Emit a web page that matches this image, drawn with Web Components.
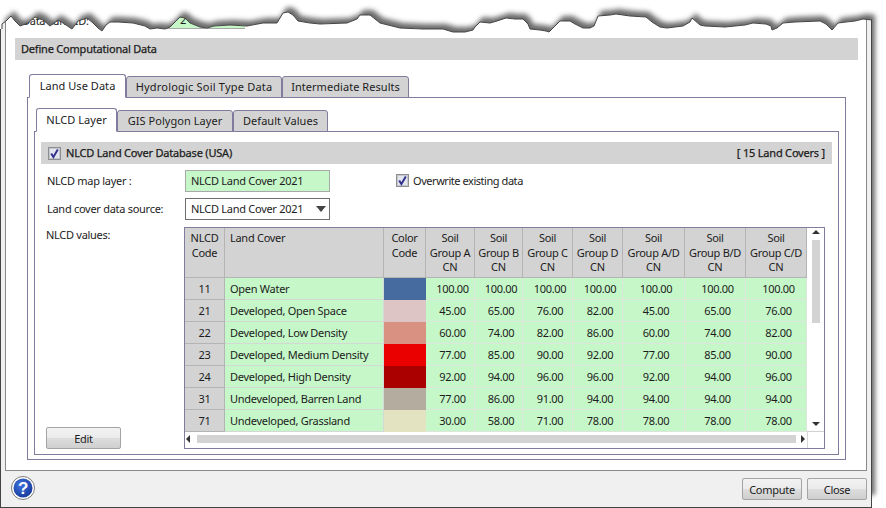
<!DOCTYPE html>
<html>
<head>
<meta charset="utf-8">
<title>Define Computational Data</title>
<style>
  html, body { margin: 0; padding: 0; background: #fff; }
  body { width: 886px; height: 508px; overflow: hidden; font: 11px "Noto Sans", "Open Sans", sans-serif; letter-spacing: -.28px; color: #1c1c1c; }
</style>
</head>
<body>

<torn-frame>
  <define-dialog>
    <section-band slot="band" plain>Define Computational Data</section-band>
    <tab-panel>
      <tab-item slot="tabs" selected style="width:97px">Land Use Data</tab-item>
      <tab-item slot="tabs" style="width:156px;letter-spacing:.2px">Hydrologic Soil Type Data</tab-item>
      <tab-item slot="tabs" style="width:127px">Intermediate Results</tab-item>
      <tab-panel nested>
        <tab-item slot="tabs" selected style="width:81px">NLCD Layer</tab-item>
        <tab-item slot="tabs" style="width:116px">GIS Polygon Layer</tab-item>
        <tab-item slot="tabs" style="width:95px">Default Values</tab-item>
        <nlcd-form></nlcd-form>
      </tab-panel>
    </tab-panel>
  </define-dialog>
</torn-frame>

<template id="form-tpl">
  <style>
    :host { display: flex; flex-direction: column; flex: 1; padding: 10px 6px 0; box-sizing: border-box; }
    .fields { display: grid; grid-template-columns: 138px 145px auto; row-gap: 6px; align-items: center; padding: 6px 0 0 6px; }
    .fields > span { position: relative; top: -1px; }
    .box { box-sizing: border-box; height: 22px; display: flex; align-items: center; padding: 0 0 2px 5px; }
    .green { background: #c6f7c8; border: 1px solid #a9a9a9; }
    .combo { background: #fff; border: 1px solid #6f6f6f; position: relative; }
    .combo i { position: absolute; right: 3px; top: 7px; border: 5px solid transparent; border-top: 6px solid #444; border-bottom: 0; }
    .over { display: flex; align-items: center; gap: 4px; margin: -2px 0 0 66px; letter-spacing: -.45px; }
    .values { display: grid; grid-template-columns: 138px auto; margin: 7px 0 0 5px; height: 222px; }
    .left { display: flex; flex-direction: column; justify-content: space-between; align-items: flex-start; }
    .left span { line-height: 16px; }
  </style>
  <section-band>
    <check-mark slot="icon"></check-mark>
    NLCD Land Cover Database (USA)
    <span slot="end">[ 15 Land Covers ]</span>
  </section-band>
  <div class="fields">
    <span>NLCD map layer :</span>
    <div class="box green">NLCD Land Cover 2021</div>
    <label class="over"><check-mark></check-mark>Overwrite existing data</label>
    <span>Land cover data source:</span>
    <div class="box combo">NLCD Land Cover 2021<i></i></div>
    <span></span>
  </div>
  <div class="values">
    <div class="left">
      <span>NLCD values:</span>
      <flat-button style="width:75px">Edit</flat-button>
    </div>
    <nlcd-grid>
      <nlcd-row code="11" cover="Open Water" color="#466b9f" values="100.00 100.00 100.00 100.00 100.00 100.00 100.00"></nlcd-row>
      <nlcd-row code="21" cover="Developed, Open Space" color="#dec5c5" values="45.00 65.00 76.00 82.00 45.00 65.00 76.00"></nlcd-row>
      <nlcd-row code="22" cover="Developed, Low Density" color="#d99282" values="60.00 74.00 82.00 86.00 60.00 74.00 82.00"></nlcd-row>
      <nlcd-row code="23" cover="Developed, Medium Density" color="#eb0000" values="77.00 85.00 90.00 92.00 77.00 85.00 90.00"></nlcd-row>
      <nlcd-row code="24" cover="Developed, High Density" color="#ab0000" values="92.00 94.00 96.00 96.00 92.00 94.00 96.00"></nlcd-row>
      <nlcd-row code="31" cover="Undeveloped, Barren Land" color="#b3ac9f" values="77.00 86.00 91.00 94.00 94.00 94.00 94.00"></nlcd-row>
      <nlcd-row code="71" cover="Undeveloped, Grassland" color="#e3e3c2" values="30.00 58.00 71.00 78.00 78.00 78.00 78.00"></nlcd-row>
    </nlcd-grid>
  </div>
</template>

<script>
// small helper, every element below is the same few lines otherwise
function shadow(el, html) {
  const root = el.attachShadow({ mode: 'open' });
  root.innerHTML = html;
  return root;
}

// torn paper edge of the screenshot, traced from the picture
const EDGE = [[2,29],[2,24],[6,21],[11,16],[15,21],[20,26],[28,23],[35,17],[43,20],[50,26],[54,23],[58,20],[63,23],[72,29],[78,21],[87,18],[93,23],[98,28],[102,31],[106,25],[110,22],[118,22],[133,23],[145,26],[150,29],[157,28],[165,29],[170,27],[175,22],[180,17],[185,18],[190,23],[200,27],[207,28],[214,26],[230,25],[247,26],[263,23],[277,23],[283,13],[288,12],[293,15],[298,21],[310,23],[320,24],[347,23],[357,19],[360,15],[370,15],[380,23],[400,28],[423,29],[443,29],[453,32],[465,32],[473,30],[475,27],[480,22],[490,23],[497,21],[506,18],[515,19],[523,19],[528,24],[530,29],[540,30],[546,31],[549,32],[553,28],[560,21],[570,21],[575,24],[583,28],[590,28],[594,26],[598,16],[610,15],[616,14],[630,16],[646,17],[652,22],[660,27],[667,28],[675,27],[683,26],[690,22],[692,18],[700,25],[705,26],[725,27],[745,25],[753,23],[766,24],[771,26],[772,30],[777,28],[783,23],[795,22],[820,21],[826,24],[832,30],[838,23],[846,22],[855,21],[863,19],[872,20]];

class TornFrame extends HTMLElement {
  constructor() {
    super();
    const line = EDGE.map(p => p.join(',')).join(' ');
    const clip = 'polygon(' + EDGE.map(p => p[0] + 'px ' + p[1] + 'px').join(',') + ',872px 508px,0 508px,0 29px)';
    shadow(this, `
      <style>
        :host { display: block; position: relative; width: 886px; height: 508px; overflow: hidden; }
        svg { position: absolute; left: 0; top: 0; }
        .paper { position: relative; width: 872px; height: 508px; display: flex; clip-path: ${clip}; }
      </style>
      <svg width="886" height="508">
        <defs><filter id="blur" x="-5%" y="-5%" width="110%" height="110%"><feGaussianBlur stdDeviation="2.6"/></filter></defs>
        <polygon points="${line} 872,500 2,500" transform="translate(3,-5)" fill="#444" opacity=".8" filter="url(#blur)"/>
      </svg>
      <div class="paper"><slot></slot></div>
      <svg width="886" height="508"><polyline points="${line}" fill="none" stroke="#444" stroke-width="1"/></svg>`);
  }
}
customElements.define('torn-frame', TornFrame);

class DefineDialog extends HTMLElement {
  constructor() {
    super();
    shadow(this, `
      <style>
        :host { display: flex; flex-direction: column; width: 872px; height: 508px; box-sizing: border-box; background: #f0f0f0; border: 1px solid #444; border-width: 0 1px 1px 1px; }
        .body { flex: 1; min-height: 0; display: flex; flex-direction: column; margin: 0 4px; background: #fff; border: 1px solid #8a8a8a; border-top: 0; padding-bottom: 10px; }
        .scrap { height: 38px; flex: none; display: flex; padding: 13px 0 0 16px; box-sizing: border-box; }
        .scrap b { font-weight: normal; width: 143px; }
        .scrap span { width: 80px; height: 16px; padding-left: 15px; box-sizing: border-box; background: #c6f7c8; border-bottom: 1px solid #a9a9a9; line-height: 13px; }
        ::slotted(section-band) { margin: 0 8px 0 9px; }
        .tabs { flex: 1; min-height: 0; display: flex; flex-direction: column; margin: 14px 20px 0 21px; }
        footer { height: 36px; flex: none; display: flex; align-items: center; padding: 0 4px 0 10px; gap: 5px; }
        footer help-icon { margin: -2px auto 0 0; }
      </style>
      <div class="body">
        <div class="scrap"><b>Data Land ID:</b><span>2</span></div>
        <slot name="band"></slot>
        <div class="tabs"><slot></slot></div>
      </div>
      <footer>
        <help-icon></help-icon>
        <flat-button style="width:60px">Compute</flat-button>
        <flat-button style="width:60px">Close</flat-button>
      </footer>`);
  }
}
customElements.define('define-dialog', DefineDialog);

class SectionBand extends HTMLElement {
  constructor() {
    super();
    shadow(this, `
      <style>
        :host { display: flex; flex: none; align-items: center; height: 22px; background: #d3d3d3; -webkit-text-stroke: .25px #1c1c1c; letter-spacing: -.2px; padding: 0 7px 2px 6px; box-sizing: border-box; gap: 5px; }
        ::slotted([slot=end]) { margin-left: auto; }
        ::slotted(check-mark) { margin: 2px 0 0 1px; }
      </style>
      <slot name="icon"></slot><span><slot></slot></span><slot name="end"></slot>`);
  }
}
customElements.define('section-band', SectionBand);

class TabPanel extends HTMLElement {
  constructor() {
    super();
    shadow(this, `
      <style>
        :host { display: flex; flex-direction: column; flex: 1; min-height: 0; }
        :host([nested]) { margin: 10px 6px 4px; }
        .strip { display: flex; align-items: flex-end; height: 24px; margin-bottom: -1px; padding-left: 2px; position: relative; z-index: 1; flex: none; }
        .panel { flex: 1; min-height: 0; display: flex; flex-direction: column; border: 1px solid #7f7c9d; }
      </style>
      <div class="strip"><slot name="tabs"></slot></div>
      <div class="panel"><slot></slot></div>`);
  }
}
customElements.define('tab-panel', TabPanel);

class TabItem extends HTMLElement {
  constructor() {
    super();
    shadow(this, `
      <style>
        :host { display: flex; align-items: center; justify-content: center; box-sizing: border-box; height: 22px; padding-bottom: 2px; background: #d3d3d3; border: 1px solid #7f7c9d; border-radius: 3px 3px 0 0; letter-spacing: .05px; }
        :host([selected]) { height: 24px; background: #fff; border-bottom-color: #fff; }
      </style>
      <slot></slot>`);
  }
}
customElements.define('tab-item', TabItem);

class CheckMark extends HTMLElement {
  constructor() {
    super();
    shadow(this, `
      <style>:host { display: inline-flex; flex: none; width: 13px; height: 13px; } svg { display: block; }</style>
      <svg width="13" height="13" viewBox="0 0 13 13">
        <rect x=".5" y=".5" width="12" height="12" fill="#f4f4f4" stroke="#8e8e8e"/>
        <rect x="1.5" y="1.5" width="10" height="10" fill="#e4e6ee" stroke="#c4c6d0"/>
        <path d="M3.2 6.4 L5.4 10 L9.8 2.6" fill="none" stroke="#33338f" stroke-width="2"/>
      </svg>`);
  }
}
customElements.define('check-mark', CheckMark);

class FlatButton extends HTMLElement {
  constructor() {
    super();
    shadow(this, `
      <style>
        :host { display: flex; align-items: center; justify-content: center; box-sizing: border-box; height: 22px; flex: none; border: 1px solid #a4a4a4; border-radius: 2px; background: linear-gradient(#f2f2f2 0, #ebebeb 48%, #dddddd 52%, #cfcfcf 100%); }
      </style>
      <slot></slot>`);
  }
}
customElements.define('flat-button', FlatButton);

class HelpIcon extends HTMLElement {
  constructor() {
    super();
    shadow(this, `
      <style>:host { display: block; flex: none; width: 24px; height: 24px; } svg { display: block; }</style>
      <svg width="24" height="24" viewBox="0 0 24 24">
        <defs><radialGradient id="g" cx=".4" cy=".35" r=".7"><stop offset="0" stop-color="#3f74e0"/><stop offset="1" stop-color="#17389a"/></radialGradient></defs>
        <circle cx="12" cy="12" r="11.5" fill="#fff" stroke="#7c7c7c"/>
        <circle cx="12" cy="12" r="9.5" fill="url(#g)"/>
        <text x="12" y="18" text-anchor="middle" font-family="Liberation Sans, sans-serif" font-weight="bold" font-size="17" fill="#fff">?</text>
      </svg>`);
  }
}
customElements.define('help-icon', HelpIcon);

const GRID_COLS = '40px 159px 42px 49px 48px 50px 50px 62px 61px 61px';
const HEADERS = ['NLCD<br>Code', 'Land Cover', 'Color<br>Code', 'Soil<br>Group A<br>CN', 'Soil<br>Group B<br>CN', 'Soil<br>Group C<br>CN', 'Soil<br>Group D<br>CN', 'Soil<br>Group A/D<br>CN', 'Soil<br>Group B/D<br>CN', 'Soil<br>Group C/D<br>CN'];

class NlcdGrid extends HTMLElement {
  constructor() {
    super();
    const heads = HEADERS.map((h, i) => `<div class="h${i === 1 ? ' l' : ''}">${h}</div>`).join('');
    shadow(this, `
      <style>
        :host { display: block; width: 641px; box-sizing: border-box; height: 222px; border: 1px solid #7f7c9d; background: #fff; --cols: ${GRID_COLS}; }
        .wrap { display: grid; grid-template-columns: 622px 17px; grid-template-rows: 204px 16px; height: 220px; }
        .head { display: grid; grid-template-columns: var(--cols); height: 50px; }
        .h { background: #d3d3d3; border: solid #b4b4b4; border-width: 0 1px 1px 0; text-align: center; line-height: 14.6px; padding-top: 3px; box-sizing: border-box; }
        .h.l { text-align: left; padding-left: 5px; }
        .v { position: relative; grid-column: 2; grid-row: 1; border-bottom: 1px solid #d0d0d0; box-sizing: border-box; }
        .v span { position: absolute; left: 5px; top: 12px; width: 8px; height: 83px; background: #d3d3d3; }
        .v i, .h2 i { position: absolute; width: 0; height: 0; border: 4px solid transparent; }
        .v .up { left: 5px; top: 2px; border-bottom: 4px solid #333; border-top: 0; }
        .v .dn { left: 5px; bottom: 5px; border-top: 4px solid #333; border-bottom: 0; }
        .h2 { position: relative; grid-column: 1; grid-row: 2; }
        .h2 span { position: absolute; left: 12px; right: 11px; top: 3px; height: 8px; background: #d3d3d3; }
        .h2 .lt { left: 1px; top: 3px; border-right: 4px solid #333; border-left: 0; }
        .h2 .rt { right: 2px; top: 3px; border-left: 4px solid #333; border-right: 0; }
        .corner { grid-column: 2; grid-row: 2; border-left: 1px solid #d8d8d8; box-sizing: border-box; }
      </style>
      <div class="wrap">
        <div><div class="head">${heads}</div><slot></slot></div>
        <div class="v"><i class="up"></i><span></span><i class="dn"></i></div>
        <div class="h2"><i class="lt"></i><span></span><i class="rt"></i></div>
        <div class="corner"></div>
      </div>`);
  }
}
customElements.define('nlcd-grid', NlcdGrid);

class NlcdRow extends HTMLElement {
  constructor() {
    super();
    const vals = this.getAttribute('values').split(' ').map(v => `<div class="c n">${v}</div>`).join('');
    shadow(this, `
      <style>
        :host { display: grid; grid-template-columns: var(--cols); height: 22px; }
        .c { box-sizing: border-box; display: flex; align-items: center; background: #c6f7c8; border: solid #dde6dd; border-width: 0 1px 1px 0; }
        .code { background: #d3d3d3; border-color: #b4b4b4; justify-content: center; }
        .name { padding-left: 5px; border-color: #d5d9d5; }
        .n { justify-content: center; padding-left: 5px; }
        .swatch { background: var(--swatch); }
      </style>
      <div class="c code">${this.getAttribute('code')}</div>
      <div class="c name">${this.getAttribute('cover')}</div>
      <div class="swatch" style="--swatch:${this.getAttribute('color')}"></div>
      ${vals}`);
  }
}
customElements.define('nlcd-row', NlcdRow);

class NlcdForm extends HTMLElement {
  constructor() {
    super();
    const root = this.attachShadow({ mode: 'open' });
    root.appendChild(document.getElementById('form-tpl').content.cloneNode(true));
  }
}
customElements.define('nlcd-form', NlcdForm);
</script>
</body>
</html>
